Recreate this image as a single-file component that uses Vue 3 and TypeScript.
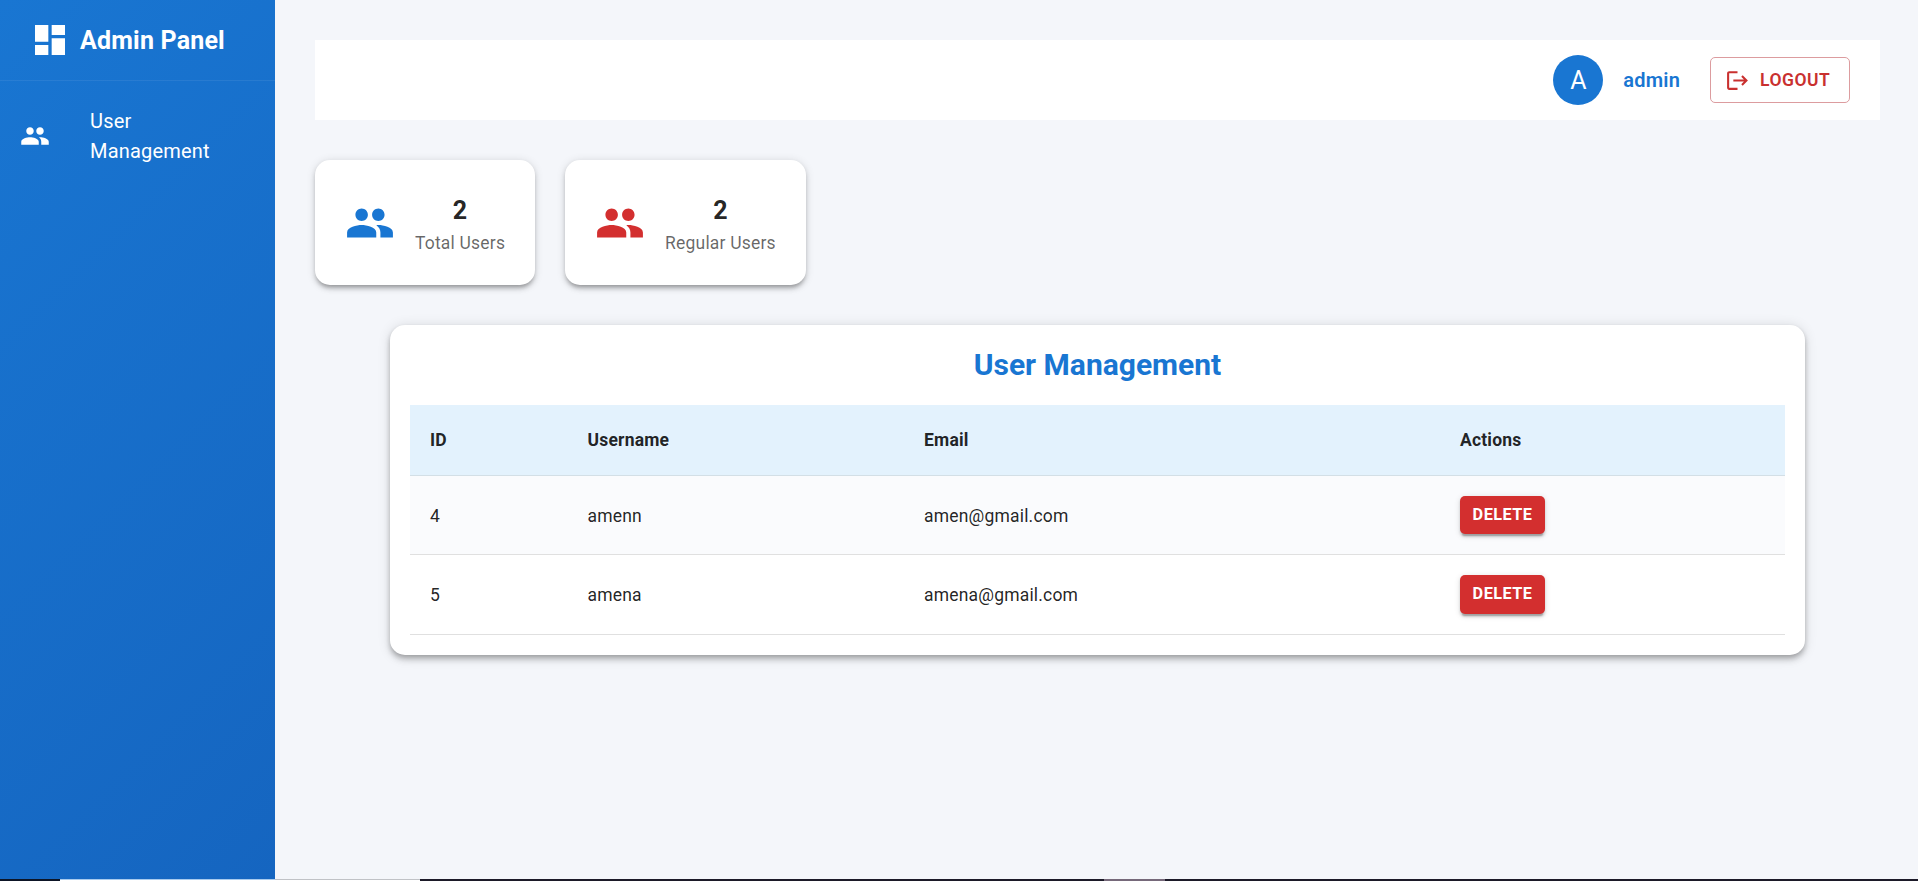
<script setup lang="ts">
interface Stat { label: string; value: number; tone: string }
interface User { id: number; name: string; email: string }

const peoplePath =
  'M16 11c1.66 0 2.99-1.34 2.99-3S17.66 5 16 5s-3 1.34-3 3 1.34 3 3 3m-8 0c1.66 0 2.99-1.34 2.99-3S9.66 5 8 5 5 6.34 5 8s1.34 3 3 3m0 2c-2.33 0-7 1.17-7 3.5V19h14v-2.500c0-2.330-4.670-3.500-7-3.500m8 0c-.29 0-.62.02-.97.050 1.160.840 1.970 1.970 1.970 3.450V19h6v-2.500c0-2.330-4.670-3.500-7-3.500'

const stats: Stat[] = [
  { label: 'Total Users', value: 2, tone: 'primary' },
  { label: 'Regular Users', value: 2, tone: 'danger' },
]
const columns: string[] = ['ID', 'Username', 'Email', 'Actions']
const users: User[] = [
  { id: 4, name: 'amenn', email: 'amen@gmail.com' },
  { id: 5, name: 'amena', email: 'amena@gmail.com' },
]
</script>

<template>
  <div class="screen">
    <div class="layout">
      <aside class="sidebar">
        <div class="brand">
          <svg class="brand-icon" viewBox="0 0 24 24"><path d="M3 13h8V3H3zm0 8h8v-6H3zm10 0h8V11h-8zm0-18v6h8V3z" /></svg>
          <span>Admin Panel</span>
        </div>
        <nav>
          <a class="nav-item">
            <svg class="nav-icon" viewBox="0 0 24 24"><path :d="peoplePath" /></svg>
            <span class="nav-label">User Management</span>
          </a>
        </nav>
      </aside>

      <main class="content">
        <header class="topbar">
          <div class="avatar">A</div>
          <span class="account">admin</span>
          <button class="logout">
            <svg viewBox="0 0 24 24"><path d="m17 7-1.410 1.410L18.170 11H8v2h10.170l-2.580 2.580L17 17l5-5zM4 5h8V3H4c-1.100 0-2 .9-2 2v14c0 1.100.9 2 2 2h8v-2H4z" /></svg>
            LOGOUT
          </button>
        </header>

        <section class="stats">
          <div v-for="s in stats" :key="s.label" class="stat">
            <svg :class="['stat-icon', s.tone]" viewBox="0 0 24 24"><path :d="peoplePath" /></svg>
            <div class="stat-text">
              <div class="stat-value">{{ s.value }}</div>
              <div class="stat-label">{{ s.label }}</div>
            </div>
          </div>
        </section>

        <section class="panel">
          <h2>User Management</h2>
          <table>
            <colgroup><col class="c-id" /><col class="c-name" /><col class="c-mail" /><col /></colgroup>
            <thead>
              <tr><th v-for="c in columns" :key="c">{{ c }}</th></tr>
            </thead>
            <tbody>
              <tr v-for="u in users" :key="u.id">
                <td>{{ u.id }}</td>
                <td>{{ u.name }}</td>
                <td>{{ u.email }}</td>
                <td><button class="delete">DELETE</button></td>
              </tr>
            </tbody>
          </table>
        </section>
      </main>
    </div>
    <div class="edge"><i class="e1"></i><i class="e2"></i><i class="e3"></i><i class="e4"></i><i class="e5"></i></div>
  </div>
</template>

<style>
body { margin: 0; overflow: hidden; }
</style>

<style scoped>
* { box-sizing: border-box; }
.screen {
  height: 881px;
  display: flex;
  flex-direction: column;
  font-family: Roboto, "Liberation Sans", sans-serif;
  color: rgba(0, 0, 0, 0.87);
  background: #f4f6fa;
}
svg { fill: currentColor; flex: none; display: block; }
button { font-family: inherit; }
.layout { flex: 1; display: flex; min-height: 0; }
.sidebar { width: 275px; flex: none; color: #fff; background: linear-gradient(135deg, #1976d2 0%, #1565c0 100%); }
.brand {
  height: 81px;
  padding-left: 30px;
  display: flex;
  align-items: center;
  gap: 10px;
  border-bottom: 1px solid rgba(255, 255, 255, 0.07);
  font-size: 25px;
  font-weight: 700;
  letter-spacing: 0.0075em;
}
.brand-icon { width: 40px; height: 40px; }
.nav-item { display: flex; align-items: center; padding: 25px 20px 0; }
.nav-icon { width: 30px; height: 30px; margin-right: 40px; }
.nav-label { width: 150px; font-size: 20px; line-height: 30px; letter-spacing: 0.00938em; }
.content { flex: 1; padding: 40px 38px 0 40px; }
.topbar { height: 80px; padding-right: 30px; background: #fff; display: flex; align-items: center; justify-content: flex-end; }
.avatar {
  width: 50px;
  height: 50px;
  border-radius: 50%;
  background: #1976d2;
  color: #fff;
  font-size: 25px;
  line-height: 51px;
  text-align: center;
}
.account { margin: 0 30px 0 20px; color: #1976d2; font-size: 20px; font-weight: 600; letter-spacing: 0.00938em; }
.logout {
  height: 46px;
  width: 140px;
  padding: 0 0 0 14px;
  display: flex;
  align-items: center;
  gap: 10px;
  border: 1px solid #dc9c9f;
  border-radius: 5px;
  background: none;
  color: #c9302f;
  font-size: 17.5px;
  font-weight: 600;
  letter-spacing: 0.5px;
}
.logout svg { width: 25px; height: 25px; }
.stats { display: flex; gap: 30px; margin: 40px 0; }
.stat, .panel {
  background: #fff;
  border-radius: 15px;
  box-shadow: 0 3.75px 3.75px -2.5px rgba(0, 0, 0, 0.2), 0 3.75px 5px rgba(0, 0, 0, 0.14), 0 1.25px 10px rgba(0, 0, 0, 0.12);
}
.stat { height: 125px; padding: 30px; display: flex; align-items: center; gap: 20px; }
.stat-icon { width: 50px; height: 50px; }
.primary { color: #1976d2; }
.danger { color: #d32f2f; }
.stat-text { text-align: center; padding-top: 2px; }
.stat-value { font-size: 25px; line-height: 40px; font-weight: 700; letter-spacing: 0.0075em; }
.stat-label { font-size: 17.5px; line-height: 25px; letter-spacing: 0.01071em; color: rgba(0, 0, 0, 0.6); }
.panel { margin: 0 75px; height: 330px; padding: 20px; box-shadow: 0 2.5px 5px -1.25px rgba(0, 0, 0, 0.2), 0 5px 6.25px rgba(0, 0, 0, 0.14), 0 1.25px 12.5px rgba(0, 0, 0, 0.12); }
h2 { margin: 0 0 20px; font-size: 30px; line-height: 40px; font-weight: 700; text-align: center; color: #1976d2; }
table { width: 100%; table-layout: fixed; border-collapse: separate; border-spacing: 0; font-size: 17.5px; letter-spacing: 0.01071em; }
.c-id { width: 157.5px; }
.c-name { width: 336.5px; }
.c-mail { width: 536px; }
th, td { padding: 0 20px; text-align: left; border-bottom: 1px solid #e0e0e0; }
th { height: 71px; font-weight: 700; background: #e3f2fd; border-color: #d3dfe6; }
td { height: 79px; line-height: 25px; }
td:not(:last-child) { padding-top: 2px; }
tbody tr:first-child td { background: #fafbfd; }
tbody tr:last-child td { height: 80px; }
.delete {
  display: block;
  width: 85px;
  height: 38.4px;
  padding: 0;
  border: 0;
  border-radius: 5px;
  background: #d32f2f;
  color: #fff;
  font-size: 16.25px;
  font-weight: 700;
  letter-spacing: 0.46px;
  box-shadow: 0 3.75px 1.25px -2.5px rgba(0, 0, 0, 0.2), 0 2.5px 2.5px rgba(0, 0, 0, 0.14), 0 1.25px 6.25px rgba(0, 0, 0, 0.12);
}
tbody tr:last-child .delete { padding-bottom: 1px; }
.edge { height: 2px; display: flex; }
.e1 { width: 60px; background: #0d1526; }
.e2 { width: 360px; background: linear-gradient(90deg, #a9cbee 215px, #c0c2c6 215px) top / 100% 1px no-repeat #fff; }
.e3 { width: 684px; background: #1c1a28; }
.e4 { width: 61px; background: #76697a; }
.e5 { flex: 1; background: #1c1a28; }
</style>
